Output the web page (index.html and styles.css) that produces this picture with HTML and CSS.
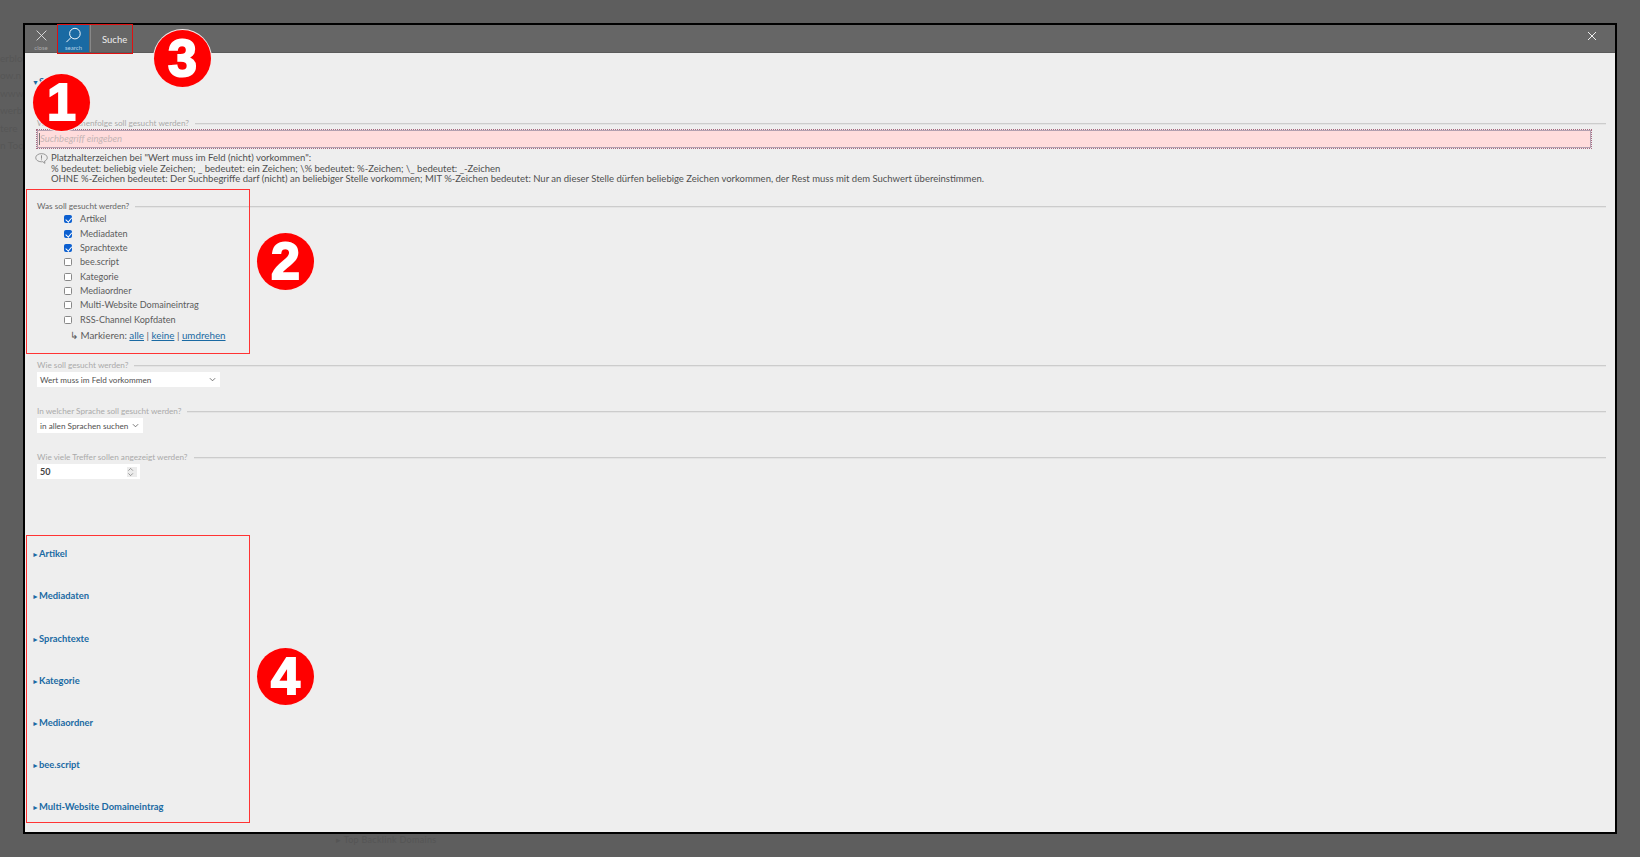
FILE: index.html
```html
<!DOCTYPE html>
<html lang="de">
<head>
<meta charset="utf-8">
<title>Suche</title>
<link rel="stylesheet" href="styles.css">
</head>
<body>
<div class="ghost">▸ Top Backlink Domains</div>
<div class="ghost-side">
  <span>erblo</span>
  <span>ow.n</span>
  <span>www</span>
  <span>werb</span>
  <span>tere</span>
  <span>n Tool</span>
</div>
<main class="modal">
  <header class="bar">
    <button class="tool tool-close">
      <svg class="tool-icon" viewBox="0 0 16 16"><path d="M2 2 14 14M14 2 2 14" fill="none" stroke="#eee" stroke-width="1"/></svg>
      <span>close</span>
    </button>
    <button class="tool tool-search">
      <svg class="tool-icon search-icon" viewBox="0 0 18 18"><circle cx="10.500" cy="7" r="5.600" fill="none" stroke="#fff" stroke-width="1"/><path d="M6.500 11 1.500 16" fill="none" stroke="#fff" stroke-width="1"/></svg>
      <span>search</span>
    </button>
    <div class="tab-title">Suche</div>
    <svg class="bar-x" viewBox="0 0 10 10"><path d="M1 1 9 9M9 1 1 9" fill="none" stroke="#eee" stroke-width="1"/></svg>
  </header>
  <div class="content">
    <h2 class="section-head open"><span class="tri">▼</span>Suche</h2>

    <section class="group first">
      <div class="legend muted"><span>Welche Zeichenfolge soll gesucht werden?</span><i></i></div>
      <div class="search-input"><span class="caret"></span>Suchbegriff eingeben</div>
      <div class="hint">
        <svg class="hint-icon" viewBox="0 0 14 12"><path d="M7 .7C3.500.7.700 2.600.700 5.200c0 2.500 2.800 4.400 6.300 4.400.5 0 1 0 1.400-.1l2.300 1.800-.3-2.500c1.900-.8 2.900-2.100 2.900-3.600C13.300 2.600 10.500.7 7 .7Z" fill="none" stroke="#777" stroke-width=".8"/><path d="M7 2.500v3.700M7 7v.9" stroke="#777" stroke-width=".9"/></svg>
        <p>Platzhalterzeichen bei "Wert muss im Feld (nicht) vorkommen":<br>% bedeutet: beliebig viele Zeichen; _ bedeutet: ein Zeichen; \% bedeutet: %-Zeichen; \_ bedeutet: _-Zeichen<br>OHNE %-Zeichen bedeutet: Der Suchbegriffe darf (nicht) an beliebiger Stelle vorkommen; MIT %-Zeichen bedeutet: Nur an dieser Stelle dürfen beliebige Zeichen vorkommen, der Rest muss mit dem Suchwert übereinstimmen.</p>
      </div>
    </section>

    <section class="group what">
      <div class="legend"><span>Was soll gesucht werden?</span><i></i></div>
      <ul class="checks">
        <li><span class="cb on"></span>Artikel</li>
        <li><span class="cb on"></span>Mediadaten</li>
        <li><span class="cb on"></span>Sprachtexte</li>
        <li><span class="cb"></span>bee.script</li>
        <li><span class="cb"></span>Kategorie</li>
        <li><span class="cb"></span>Mediaordner</li>
        <li><span class="cb"></span>Multi-Website Domaineintrag</li>
        <li><span class="cb"></span>RSS-Channel Kopfdaten</li>
      </ul>
      <div class="marks">↳ Markieren: <a>alle</a> | <a>keine</a> | <a>umdrehen</a></div>
    </section>

    <section class="group how">
      <div class="legend muted"><span>Wie soll gesucht werden?</span><i></i></div>
      <div class="select select-how">Wert muss im Feld vorkommen<svg viewBox="0 0 8 5"><path d="M1 1 4 4 7 1" fill="none" stroke="#666"/></svg></div>
    </section>
    <section class="group lang">
      <div class="legend muted"><span>In welcher Sprache soll gesucht werden?</span><i></i></div>
      <div class="select select-lang">in allen Sprachen suchen<svg viewBox="0 0 8 5"><path d="M1 1 4 4 7 1" fill="none" stroke="#666"/></svg></div>
    </section>
    <section class="group count">
      <div class="legend muted"><span>Wie viele Treffer sollen angezeigt werden?</span><i></i></div>
      <div class="number">50<span class="spin"><svg viewBox="0 0 8 11"><path d="M1.500 4 4 1.500 6.500 4M1.500 7 4 9.500 6.500 7" fill="none" stroke="#777" stroke-width=".8"/></svg></span></div>
    </section>

    <div class="results">
      <h3 class="section-head"><span class="tri">►</span>Artikel</h3>
      <h3 class="section-head"><span class="tri">►</span>Mediadaten</h3>
      <h3 class="section-head"><span class="tri">►</span>Sprachtexte</h3>
      <h3 class="section-head"><span class="tri">►</span>Kategorie</h3>
      <h3 class="section-head"><span class="tri">►</span>Mediaordner</h3>
      <h3 class="section-head"><span class="tri">►</span>bee.script</h3>
      <h3 class="section-head"><span class="tri">►</span>Multi-Website Domaineintrag</h3>
    </div>
  </div>
</main>

<div class="mark-box box-tabs"></div>
<div class="mark-box box-what"></div>
<div class="mark-box box-results"></div>
<div class="badge badge-1">1</div>
<div class="badge badge-2">2</div>
<div class="badge badge-3">3</div>
<div class="badge badge-4">4</div>
</body>
</html>
```
FILE: styles.css
```css
* { box-sizing: border-box; }
html, body { margin: 0; height: 857px; overflow: hidden; }
body {
  position: relative;
  padding: 23px;
  background: #5e5e5e;
  font-family: "Lato", "Open Sans", sans-serif;
  font-size: 9.500px;
  color: #505050;
}
.ghost { position: absolute; left: 336px; top: 834px; color: #555; font-size: 9px; letter-spacing: .3px; }
.ghost-side {
  position: absolute;
  left: 0;
  top: 50px;
  width: 23px;
  overflow: hidden;
  display: flex;
  flex-direction: column;
  color: #565656;
  font-size: 10px;
  line-height: 17.400px;
  white-space: nowrap;
}
.modal {
  position: relative;
  width: 1594px;
  height: 811px;
  border: 2px solid #000;
  background: #eee;
  display: flex;
  flex-direction: column;
}
.bar {
  height: 28px;
  flex: none;
  background: #666;
  display: flex;
  align-items: stretch;
  border-bottom: 1px solid #5a5a5a;
}
.tool {
  border: 0;
  padding: 3px 0 0;
  margin: 0;
  background: none;
  width: 32px;
  color: #aaa;
  font: inherit;
  font-size: 6px;
  display: flex;
  flex-direction: column;
  align-items: center;
  line-height: 7px;
}
.tool-search { width: 31px; margin-left: 1px; background: #1a6aa3; color: #b9d3e6; }
.tool-icon { width: 13px; height: 13px; margin: 1px 0 2px; flex: none; }
.search-icon { width: 17px; height: 17px; margin: -1px 0 0; }
.tab-title {
  margin-left: 1px;
  width: 42px;
  padding: 9px 0 0 11px;
  color: #eee;
  font-size: 9.500px;
  border-left: 1px solid #888;
}
.bar-x { width: 10px; height: 10px; margin: 6px 18px 0 auto; }
.content { flex: 1; padding: 22px 9px 0 7px; display: flex; flex-direction: column; }
.section-head {
  margin: 0;
  display: flex;
  align-items: center;
  color: #1a6aa3;
  font-size: 9.400px;
  line-height: 14px;
  font-weight: 700;
}
.tri { width: 7px; font-size: 7px; flex: none; }
.group { padding-left: 5px; }
.first { margin-top: 29px; }
.legend { display: flex; align-items: center; gap: 6px; line-height: 10px; font-size: 8.200px; color: #666; }
.legend i { flex: 1; height: 1px; background: #ccc; box-shadow: 0 1px 0 #e4e4e4; }
.legend.muted { color: #aaa; }
.search-input {
  margin: 2px 15px 0 0;
  height: 18px;
  background: #ffdcdc;
  outline: 1px dotted #a8687f;
  border: 1px solid #b4a0b0;
  color: #c4b4b4;
  font-style: italic;
  font-size: 9.500px;
  line-height: 16px;
  padding-left: 1px;
  display: flex;
}
.caret { width: 1px; height: 12px; margin: 2px 0 0; background: #777; flex: none; }
.hint { display: flex; margin-top: 5px; margin-left: -2px; }
.hint-icon { width: 13px; height: 11px; margin: 0 3px 0 0; flex: none; }
.hint p { margin: 0; line-height: 10.600px; }
.what { margin-top: 16.500px; }
.checks { list-style: none; margin: 1px 0 0 27px; padding: 0; font-size: 9.100px; }
.checks li { height: 14.300px; display: flex; align-items: center; color: #5c5c5c; line-height: 14px; }
.cb {
  width: 8px; height: 8px; flex: none; margin-right: 8px;
  border: 1px solid #888; border-radius: 1.500px; background: #fff;
  position: relative;
}
.cb.on { background: #0b5fd0; border-color: #0b5fd0; }
.cb.on::after {
  content: ""; position: absolute; left: 1.500px; top: 0;
  width: 2.500px; height: 4.500px;
  border: solid #fff; border-width: 0 1px 1px 0; transform: rotate(40deg);
}
.marks { margin: 2.500px 0 0 33px; line-height: 12px; color: #5c5c5c; font-size: 9.800px; }
.marks a { color: #1a6aa3; text-decoration: underline; }
.how, .lang, .count { margin-top: 19px; }
.select {
  margin-top: 2px;
  height: 15px;
  background: #fff;
  display: flex;
  align-items: center;
  justify-content: space-between;
  padding: 0 4px 0 3px;
  font-size: 8.200px;
  white-space: nowrap;
}
.select svg { width: 7px; height: 5px; flex: none; }
.select-how { width: 183px; }
.select-lang { width: 106px; }
.number {
  margin-top: 2px;
  width: 103px;
  height: 15px;
  background: #fff;
  display: flex;
  align-items: center;
  justify-content: space-between;
  padding: 0 3px;
  font-size: 9px;
  font-weight: 700;
  color: #444;
}
.spin { width: 10px; height: 10px; background: #ececec; display: flex; }
.results { margin-top: 68px; display: flex; flex-direction: column; gap: 28.200px; }
.mark-box { position: absolute; border: 1px solid #f33; left: 26px; width: 224px; }
.box-tabs { left: 57px; top: 24px; width: 76px; height: 30px; border-color: #e01010; }
.box-what { top: 189px; height: 165px; }
.box-results { top: 535px; height: 288px; }
.badge {
  position: absolute;
  width: 57px;
  height: 57px;
  border-radius: 50%;
  background: #f00;
  color: #fff;
  font-family: "Liberation Sans", sans-serif;
  font-weight: 700;
  font-size: 52px;
  line-height: 57px;
  text-align: center;
  -webkit-text-stroke: 2px #fff;
  box-shadow: 0 0 0 1px #f3eaea;
}
.badge-1 { left: 33px; top: 74px; }
.badge-2 { left: 257px; top: 233px; }
.badge-3 { left: 154px; top: 30px; }
.badge-4 { left: 257px; top: 648px; }
```
